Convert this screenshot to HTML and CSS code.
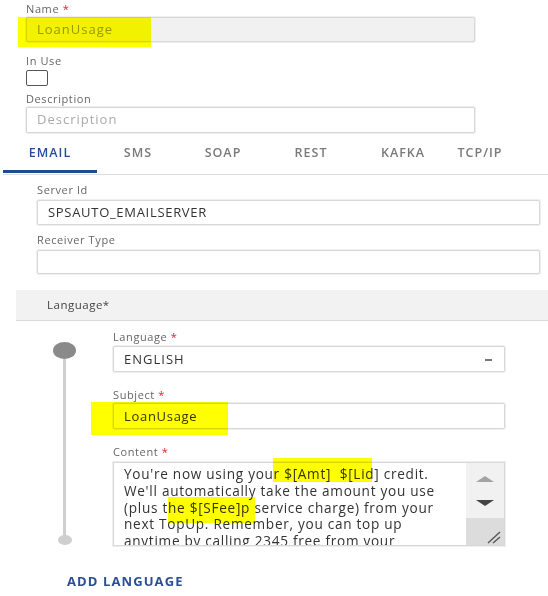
FILE: index.html
```html
<!DOCTYPE html>
<html>
<head>
<meta charset="utf-8">
<link rel="stylesheet" href="styles.css">
</head>
<body>
<div class="page">
  <div class="top">
    <div class="label first">Name <span class="req">*</span></div>
    <div class="input disabled">LoanUsage</div>
    <div class="label inuse">In Use</div>
    <div class="checkbox"></div>
    <div class="label desc">Description</div>
    <div class="input placeholder">Description</div>
  </div>

  <div class="tabs">
    <div class="tab active">EMAIL</div>
    <div class="tab">SMS</div>
    <div class="tab">SOAP</div>
    <div class="tab">REST</div>
    <div class="tab">KAFKA</div>
    <div class="tab">TCP/IP</div>
  </div>

  <div class="tab-body">
    <div class="label">Server Id</div>
    <div class="input wide">SPSAUTO_EMAILSERVER</div>
    <div class="label recv">Receiver Type</div>
    <div class="input wide short"></div>
  </div>

  <div class="lang">
    <div class="lang-head">Language*</div>
    <div class="lang-body">
      <div class="timeline">
        <div class="dot"></div>
        <div class="line"></div>
        <div class="end"></div>
      </div>
      <div class="lang-fields">
        <div class="label l1">Language <span class="req">*</span></div>
        <div class="input select"><span>ENGLISH</span><span class="caret"></span></div>
        <div class="label l2">Subject <span class="req">*</span></div>
        <div class="input">LoanUsage</div>
        <div class="label l2">Content <span class="req">*</span></div>
        <div class="textarea">
          <div class="ta-text">You're now using your $[Amt]&nbsp; $[Lid] credit.<br>We'll automatically take the amount you use<br>(plus the $[SFee]p service charge) from your<br>next TopUp. Remember, you can top up<br>anytime by calling 2345 free from your</div>
          <div class="scroll">
            <div class="track">
              <span class="up"></span>
              <span class="down"></span>
            </div>
            <div class="grip">
              <svg width="16" height="14" viewBox="0 0 16 14"><path d="M2 13 L14 2 M7 13 L14 7" stroke="#555" stroke-width="1.4" fill="none"/></svg>
            </div>
          </div>
        </div>
      </div>
    </div>
  </div>

  <div class="add">ADD LANGUAGE</div>

  <div class="hl hl-name"></div>
  <div class="hl hl-subject"></div>
  <div class="hl hl-c1"></div>
  <div class="hl hl-c2"></div>
</div>
</body>
</html>
```

FILE: styles.css
```css
* { box-sizing: border-box; }
html, body { margin: 0; padding: 0; background: #fff; }
body {
  font-family: "Open Sans", "Liberation Sans", sans-serif;
  color: #333;
  width: 548px;
  height: 596px;
  overflow: hidden;
}
.page { position: relative; width: 548px; height: 596px; }

.label {
  font-size: 11px;
  line-height: 14px;
  height: 14px;
  color: #666;
  letter-spacing: 0.6px;
}
.req { color: #d9262c; }

.input {
  height: 25px;
  border: 1px solid #d8d8d8;
  border-radius: 2px;
  background: #fff;
  font-size: 13px;
  line-height: 23px;
  padding-left: 10px;
  color: #333;
  letter-spacing: 0.7px;
  box-shadow: 0 0 0 1px #efefef;
}

.top { padding-left: 26px; width: 475px; }
.top .first { margin-top: 2px; }
.top .input { margin-top: 1px; }
.input.disabled { background: #f1f1f1; color: #999; letter-spacing: 1px; }
.input.placeholder { color: #aaa; height: 26px; letter-spacing: 1px; }
.inuse { margin-top: 12px; }
.checkbox {
  margin-top: 2px;
  width: 22px;
  height: 16px;
  border: 1.5px solid #555;
  border-radius: 2px;
}
.desc { margin-top: 6px; }

.tabs {
  display: flex;
  margin-left: 3px;
  margin-top: 0;
  height: 42px;
  box-shadow: inset 0 -1px 0 #dcdcdc;
}
.tab {
  font-size: 12.5px;
  font-weight: 600;
  color: #7a7a7a;
  text-align: center;
  padding-top: 12px;
  line-height: 16px;
  letter-spacing: 1px;
}
.tab:nth-child(1) { width: 94px; }
.tab:nth-child(2) { width: 82px; }
.tab:nth-child(3) { width: 88px; }
.tab:nth-child(4) { width: 88px; }
.tab:nth-child(5) { width: 96px; }
.tab:nth-child(6) { width: 58px; }
.tab.active { color: #214d9b; border-bottom: 3px solid #1f4a94; height: 40px; }

.tab-body { padding-left: 37px; width: 540px; padding-top: 8px; }
.tab-body .input { margin-top: 3px; }
.tab-body .input.short { height: 24px; }
.recv { margin-top: 8px; }

.lang { margin-top: 16px; margin-left: 16px; }
.lang-head {
  height: 31px;
  background: #f2f2f2;
  border-bottom: 1px solid #d9d9d9;
  font-size: 11.5px;
  line-height: 30px;
  color: #444;
  padding-left: 31px;
  letter-spacing: 0.5px;
}
.lang-body { display: flex; }
.timeline {
  width: 97px;
  display: flex;
  flex-direction: column;
  align-items: center;
  padding-top: 21px;
}
.dot {
  width: 23px;
  height: 17px;
  border-radius: 50%;
  background: #8a8a8a;
}
.line {
  width: 3px;
  height: 179px;
  background: #cfcfcf;
}
.end {
  width: 14px;
  height: 10px;
  border-radius: 50%;
  background: #cfcfcf;
  margin-top: -3px;
}
.lang-fields { width: 392px; }
.lang-fields .l1 { margin-top: 9px; }
.lang-fields .l2 { margin-top: 16px; }
.lang-fields .input { margin-top: 2px; height: 26px; line-height: 24px; }
.lang-fields .l2 + .input { margin-top: 1px; }
.select { display: flex; justify-content: space-between; align-items: center; padding-right: 12px; letter-spacing: 1px; }
.caret {
  width: 7px;
  height: 2px;
  background: #777;
  margin-top: 2px;
}

.textarea {
  margin-top: 3px;
  height: 84px;
  border: 1px solid #d8d8d8;
  display: flex;
  overflow: hidden;
  box-shadow: 0 0 0 1px #efefef;
}
.ta-text {
  flex: 1;
  font-size: 13.6px;
  line-height: 16.8px;
  padding: 3px 0 0 10px;
  white-space: nowrap;
  overflow: hidden;
  color: #333;
  letter-spacing: 0.72px;
}
.scroll { width: 38px; display: flex; flex-direction: column; }
.track {
  height: 55px;
  background: #f1f1f1;
  display: flex;
  flex-direction: column;
  align-items: center;
  padding-top: 13px;
}
.up {
  width: 0; height: 0;
  border-left: 9px solid transparent;
  border-right: 9px solid transparent;
  border-bottom: 6px solid #a3a3a3;
}
.down {
  margin-top: 18px;
  width: 0; height: 0;
  border-left: 9px solid transparent;
  border-right: 9px solid transparent;
  border-top: 6px solid #444;
}
.grip {
  flex: 1;
  background: #dcdcdc;
  display: flex;
  justify-content: flex-end;
  align-items: flex-end;
  padding: 0 2px 1px 0;
}

.add {
  margin-top: 26px;
  margin-left: 67px;
  font-size: 13px;
  font-weight: 700;
  color: #2a4f97;
  line-height: 18px;
  letter-spacing: 1.1px;
}

.hl {
  position: absolute;
  background: #ffff00;
  mix-blend-mode: multiply;
}
.hl-name { left: 18px; top: 15px; width: 133px; height: 30px; }
.hl-subject { left: 91px; top: 400px; width: 137px; height: 33px; }
.hl-c1 { left: 273px; top: 456px; width: 99px; height: 24px; }
.hl-c2 { left: 168px; top: 495px; width: 87px; height: 26px; }
```
